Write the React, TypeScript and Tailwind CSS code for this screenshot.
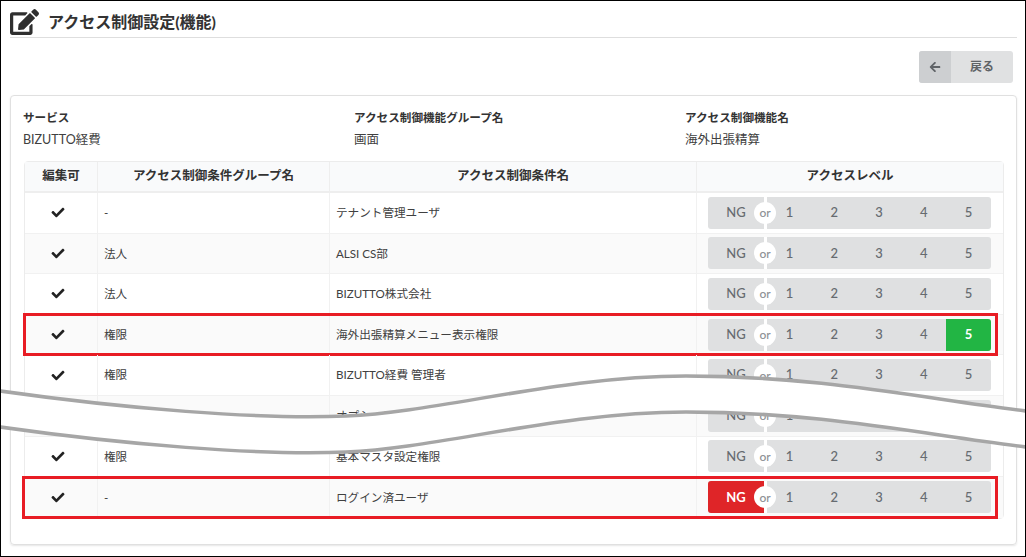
import { FC } from "react";
import { FaArrowLeft, FaCheck, FaEdit } from "react-icons/fa";

const rows = [
  { group: "-", name: "テナント管理ユーザ" },
  { group: "法人", name: "ALSI CS部" },
  { group: "法人", name: "BIZUTTO株式会社" },
  { group: "権限", name: "海外出張精算メニュー表示権限", level: "5", mark: "top" },
  { group: "権限", name: "BIZUTTO経費 管理者" },
  { group: "権限", name: "オプション" },
  { group: "権限", name: "基本マスタ設定権限" },
  { group: "-", name: "ログイン済ユーザ", level: "NG", mark: "bottom" },
];

const LevelBar: FC<{ level?: string }> = ({ level }) => {
  return (
    <div className="relative flex h-8 w-[283px] overflow-hidden rounded-[3px] bg-[#dfe0e1] text-[13px] font-medium text-[#666b70]">
      <div
        className={
          level === "NG"
            ? "flex w-[56px] items-center justify-center font-bold text-white bg-[#df2528]"
            : "flex w-[56px] items-center justify-center"
        }
      >
        NG
      </div>
      <div className="w-[3px] bg-white" />
      <div className="flex flex-1 items-center">
        {["1", "2", "3", "4"].map((n) => (
          <div key={n} className="flex w-[44.8px] items-center justify-center">
            {n}
          </div>
        ))}
        <div
          className={
            level === "5"
              ? "flex h-full flex-1 items-center justify-center font-bold text-white bg-[#22b544]"
              : "flex h-full flex-1 items-center justify-center"
          }
        >
          5
        </div>
      </div>
      <span className="absolute left-[46px] top-[5px] flex h-[22px] w-[22px] items-center justify-center rounded-full bg-white pt-[1px] text-[12px] text-[#8d9094]">
        or
      </span>
    </div>
  );
};

const App: FC = () => {
  return (
    <div
      className="relative h-[557px] w-[1026px] overflow-hidden border border-black bg-white text-[#404040]"
      style={{ fontFamily: 'Lato, "Noto Sans CJK JP", sans-serif' }}
    >
      <div className="mx-[9px] mr-[8px] flex h-[37px] items-center gap-[9px] border-b border-[#dedede] pt-[6px]">
        <FaEdit className="h-[28px] w-[29px] text-[#2f2f2f]" />
        <h1 className="text-[16px] font-bold text-[#333]">アクセス制御設定(機能)</h1>
      </div>

      <div className="mr-[12px] mt-[13px] flex justify-end">
        <button className="flex h-8 w-[94px] overflow-hidden rounded-[3px] bg-[#e0e1e2] text-[12px] font-bold text-[#5f6367]">
          <span className="flex h-full w-8 items-center justify-center bg-[#cdcfd1]">
            <FaArrowLeft className="h-[12px] w-[12px]" />
          </span>
          <span className="flex h-full flex-1 items-center justify-center">戻る</span>
        </button>
      </div>

      <div className="mx-[9px] mr-[8px] mt-[12px] h-[450px] rounded-[4px] border border-[#e0e0e0] pl-[12px] pt-[13px] shadow-[0_1px_2px_rgba(0,0,0,0.1)]">
        <div className="flex h-[52px] text-[12.5px]">
          <dl className="w-[331px]">
            <dt className="text-[11.6px] font-bold leading-[18px] text-[#333]">サービス</dt>
            <dd className="mt-[4px] leading-[18px]">BIZUTTO経費</dd>
          </dl>
          <dl className="w-[331px]">
            <dt className="text-[11.6px] font-bold leading-[18px] text-[#333]">アクセス制御機能グループ名</dt>
            <dd className="mt-[4px] leading-[18px]">画面</dd>
          </dl>
          <dl>
            <dt className="text-[11.6px] font-bold leading-[18px] text-[#333]">アクセス制御機能名</dt>
            <dd className="mt-[4px] leading-[18px]">海外出張精算</dd>
          </dl>
        </div>

        <div className="ml-[1px] w-[980px] rounded-[4px] border border-[#ececec] text-[11.6px]">
          <div className="flex h-[31px] items-center border-b-2 border-[#eeeeee] bg-[#f9fafb] text-[12.5px] font-bold text-[#333]">
            <div className="flex h-full w-[73px] items-center justify-center border-r border-[#eeeeee]">編集可</div>
            <div className="flex h-full w-[232px] items-center justify-center border-r border-[#eeeeee]">アクセス制御条件グループ名</div>
            <div className="flex h-full w-[367px] items-center justify-center border-r border-[#eeeeee]">アクセス制御条件名</div>
            <div className="flex-1 text-center">アクセスレベル</div>
          </div>
          {rows.map((row, index) => (
            <div
              key={index}
              className={
                index % 2 === 1
                  ? "relative flex h-[40.6px] items-center border-b border-[#f1f1f1] bg-[#fafafa] last:border-b-0"
                  : "relative flex h-[40.6px] items-center border-b border-[#f1f1f1] last:border-b-0"
              }
            >
              <div className="flex h-full w-[73px] items-center justify-center border-r border-[#f1f1f1] pr-[6px]">
                <FaCheck className="h-[13px] w-[14px] text-[#222]" />
              </div>
              <div className="flex h-full w-[232px] items-center border-r border-[#f1f1f1] pl-[6px]">{row.group}</div>
              <div className="flex h-full w-[367px] items-center border-r border-[#f1f1f1] pl-[6px]">{row.name}</div>
              <div className="flex flex-1 items-center pl-[11px]">
                <LevelBar level={row.level} />
              </div>
              {row.mark === "top" && (
                <div className="absolute -left-[2px] -top-[2px] h-[43px] w-[975px] border-[3px] border-[#e81c24]" />
              )}
              {row.mark === "bottom" && (
                <div className="absolute -left-[3px] -top-[1px] h-[43px] w-[976px] border-[3px] border-[#e81c24]" />
              )}
            </div>
          ))}
        </div>
      </div>

      {/* 省略を示す波線 */}
      <svg className="absolute -left-px -top-px" width="1026" height="557" viewBox="0 0 1026 557" fill="none">
        <path
          d="M0 391C120 408 260 420 346 416C440 412 560 376 686 376C820 376 920 398 1026 411V447C920 434 820 412 686 412C560 412 440 448 346 452C260 456 120 444 0 427Z"
          fill="#fff"
        />
        <path d="M0 391C120 408 260 420 346 416C440 412 560 376 686 376C820 376 920 398 1026 411" stroke="#a6a6a6" strokeWidth="3.5" />
        <path d="M0 427C120 444 260 456 346 452C440 448 560 412 686 412C820 412 920 434 1026 447" stroke="#a6a6a6" strokeWidth="3.5" />
      </svg>
    </div>
  );
};

export default App;
